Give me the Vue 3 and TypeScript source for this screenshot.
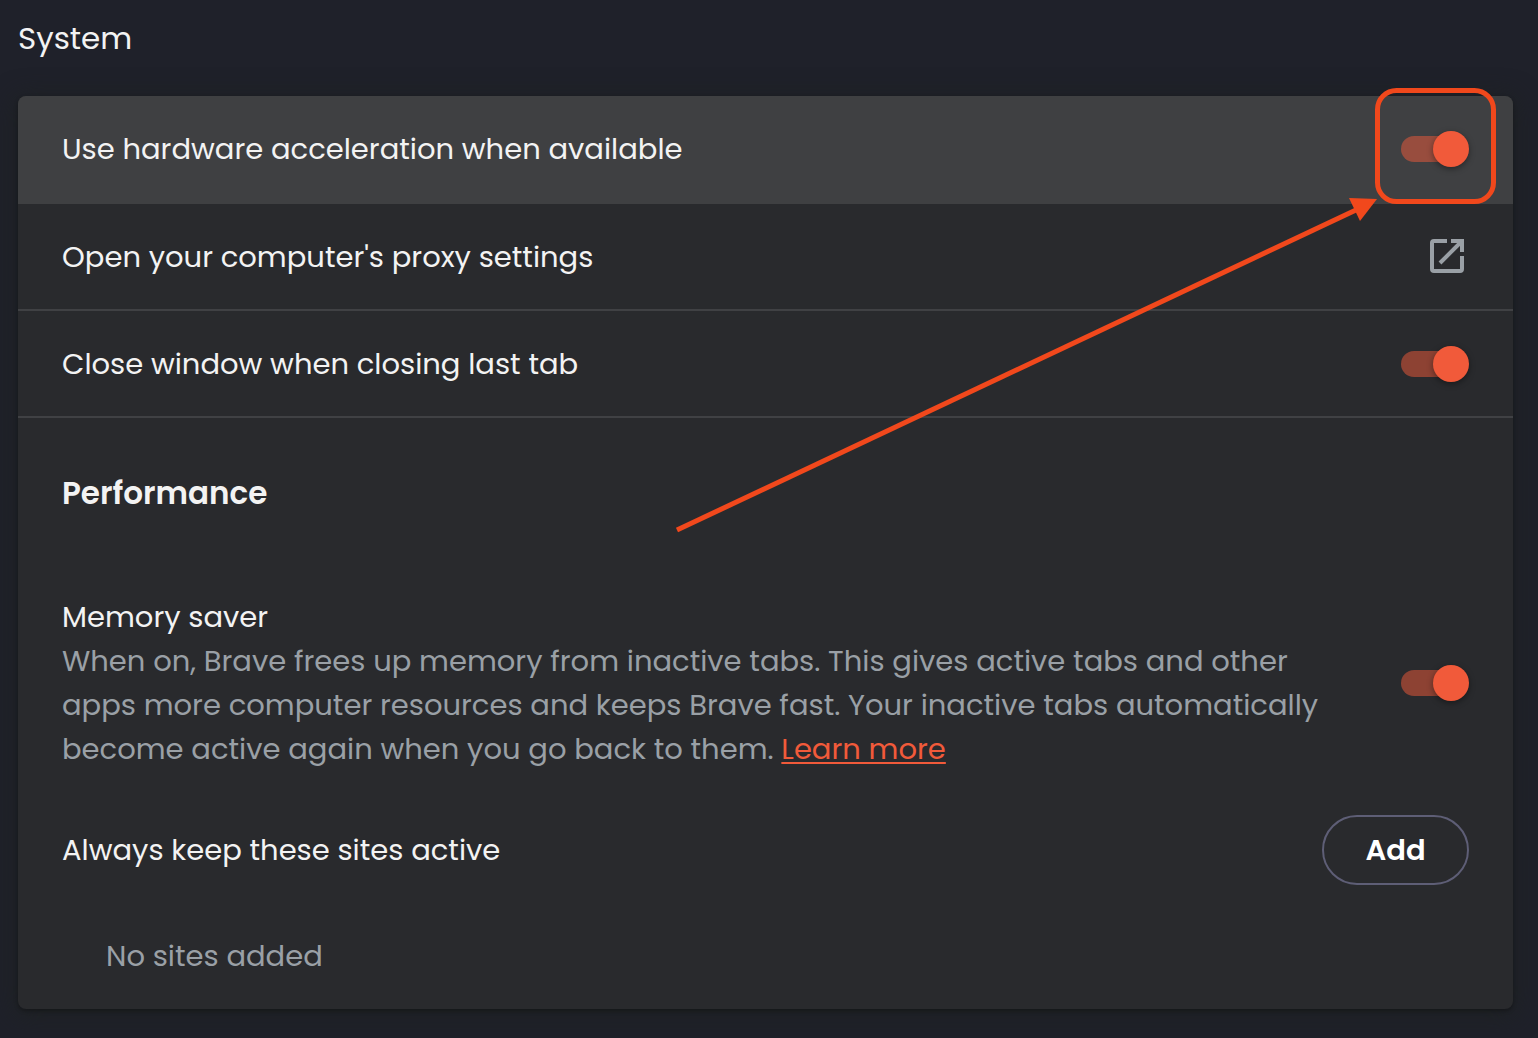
<script setup lang="ts">
import { ref } from 'vue'

const hardwareAcceleration = ref(true)
const closeWithLastTab = ref(true)
const memorySaver = ref(true)
</script>

<template>
  <main class="page">
    <h1 class="page-title">System</h1>

    <section class="card">
      <div class="row row-active">
        <label class="label" for="hardware">Use hardware acceleration when available</label>
        <input id="hardware" v-model="hardwareAcceleration" class="toggle" type="checkbox" role="switch" />
      </div>

      <div class="row">
        <span id="proxy-label" class="label">Open your computer's proxy settings</span>
        <button class="icon-button" type="button" aria-labelledby="proxy-label">
          <svg viewBox="0 0 44 44" width="44" height="44" fill="none" stroke="currentColor" stroke-width="4">
            <path d="M22 6H9Q7 6 7 8V34Q7 36 9 36H35Q37 36 37 34V21" />
            <path d="M26 6H37V17M37 6L15 28" />
          </svg>
        </button>
      </div>

      <div class="row">
        <label class="label" for="close-window">Close window when closing last tab</label>
        <input id="close-window" v-model="closeWithLastTab" class="toggle" type="checkbox" role="switch" />
      </div>

      <h2 class="section-title">Performance</h2>

      <div class="setting">
        <div class="setting-text">
          <label class="label" for="memory-saver">Memory saver</label>
          <p class="description">
            When on, Brave frees up memory from inactive tabs. This gives active tabs and other
            apps more computer resources and keeps Brave fast. Your inactive tabs automatically
            become active again when you go back to them.
            <a class="link" href="#">Learn more</a>
          </p>
        </div>
        <input id="memory-saver" v-model="memorySaver" class="toggle" type="checkbox" role="switch" />
      </div>

      <div class="sites">
        <span class="label">Always keep these sites active</span>
        <button class="add-button" type="button">Add</button>
      </div>
      <p class="empty">No sites added</p>

      <svg class="callout" viewBox="0 0 1706 920" width="853" height="460" aria-hidden="true">
        <rect x="1435" y="21" width="232" height="222" rx="38" fill="none" stroke="#f1481c" stroke-width="10" />
        <path d="M34 900L1394 259" stroke="#f1481c" stroke-width="10" />
        <path d="M1434 238L1378 236L1400 282Z" fill="#f1481c" />
      </svg>
    </section>
  </main>
</template>

<style>
body {
  margin: 0;
  background: #1f212a;
}
</style>

<style scoped>
.page {
  box-sizing: border-box;
  min-height: 100vh;
  padding: 16px 25px 29px 18px;
  background: #1f212a;
  color: #f3f3f3;
  font-family: Poppins, Inter, "Noto Sans", sans-serif;
  font-size: 29px;
  line-height: 44px;
}

.page-title {
  margin: 0 0 36px;
  font-size: 31px;
  font-weight: 400;
}

.card {
  position: relative;
  border-radius: 8px;
  background: #292a2d;
  box-shadow: 0 2px 4px rgba(0, 0, 0, 0.3), 0 4px 24px 4px rgba(30, 33, 34, 0.9);
}

.row {
  display: flex;
  align-items: center;
  justify-content: space-between;
  box-sizing: border-box;
  min-height: 107px;
  padding: 0 44px;
  border-bottom: 2px solid #404144;
}

.row-active {
  min-height: 108px;
  border-color: #3f4042;
  border-radius: 8px 8px 0 0;
  background: #3f4042;
}

.toggle {
  position: relative;
  flex: none;
  appearance: none;
  width: 68px;
  height: 36px;
  margin: 0;
}

.toggle::before {
  content: "";
  position: absolute;
  inset: 5px 4px 5px 0;
  border-radius: 13px;
  background: rgba(241, 90, 58, 0.5);
}

.toggle::after {
  content: "";
  position: absolute;
  top: 0;
  left: 0;
  width: 36px;
  height: 36px;
  border-radius: 50%;
  background: #9aa0a6;
  box-shadow: 0 2px 6px rgba(0, 0, 0, 0.4);
}

.toggle:checked::after {
  left: 32px;
  background: #f15a3a;
}

.icon-button {
  display: flex;
  padding: 0;
  border: 0;
  background: none;
  color: #9aa0a6;
}

.section-title {
  margin: 0;
  padding: 53px 44px 80px;
  font-size: 31px;
  font-weight: 600;
}

.setting {
  display: flex;
  align-items: center;
  justify-content: space-between;
  gap: 72px;
  padding: 0 44px;
}

.description {
  margin: 0;
  color: #9aa0a6;
}

.link {
  color: #f15a3a;
  text-decoration-thickness: 2px;
  text-underline-offset: 3px;
}

.sites {
  display: flex;
  align-items: center;
  justify-content: space-between;
  padding: 44px 44px 0;
}

.add-button {
  box-sizing: border-box;
  min-width: 147px;
  height: 70px;
  border: 2px solid #5e5e76;
  border-radius: 35px;
  background: none;
  color: #fff;
  font: inherit;
  font-weight: 600;
}

.empty {
  margin: 0;
  padding: 49px 88px 31px;
  color: #9aa0a6;
}

.callout {
  position: absolute;
  top: -16px;
  right: 0;
  pointer-events: none;
}
</style>
